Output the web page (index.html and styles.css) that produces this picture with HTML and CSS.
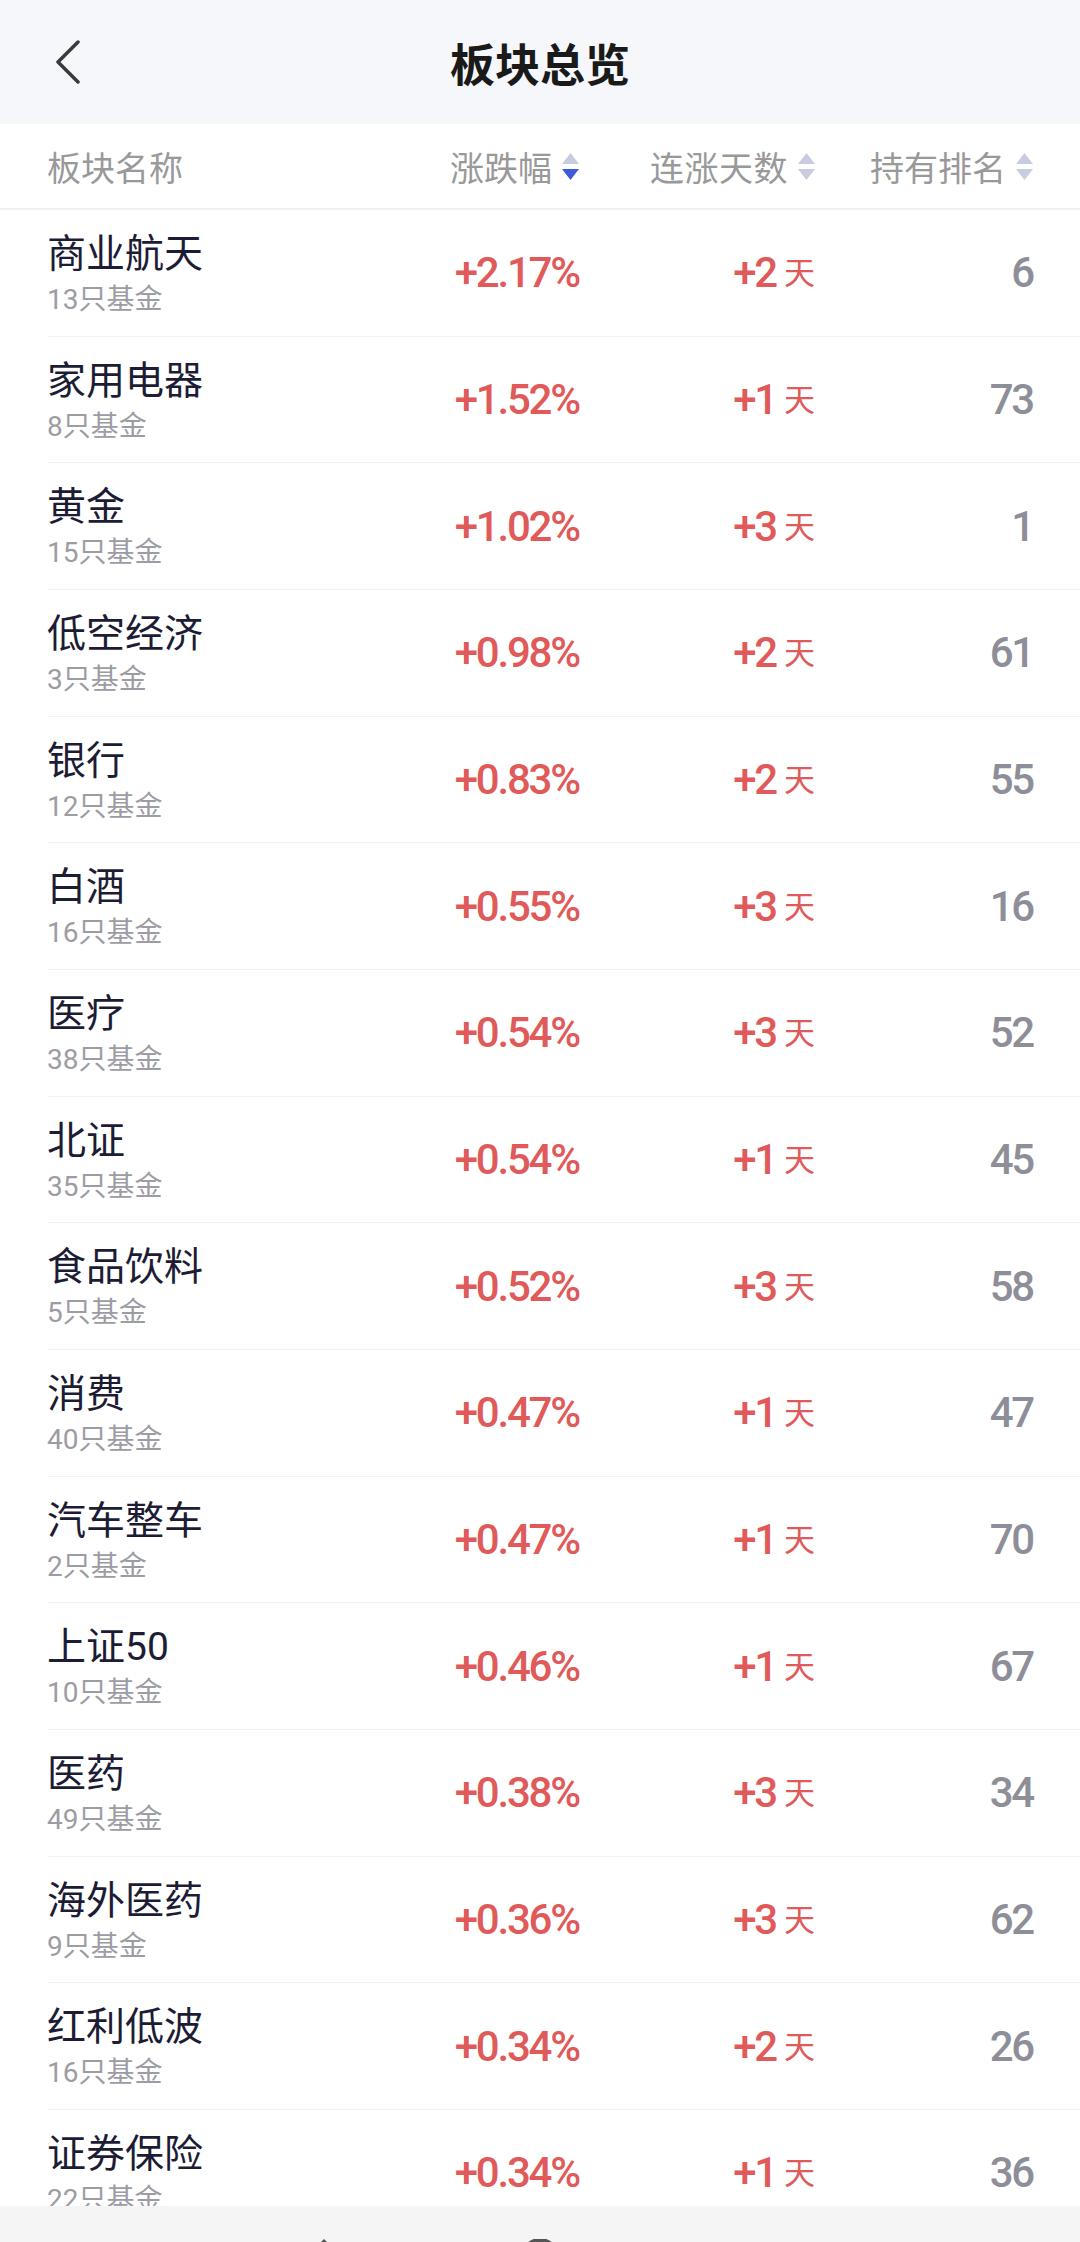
FILE: index.html
```html
<!DOCTYPE html>
<html lang="zh-CN">
<head>
    <meta charset="UTF-8">
    <meta name="viewport" content="width=device-width, initial-scale=1.0">
    <title>板块总览</title>
    <link rel="stylesheet" href="styles.css">
</head>
<body>

<header class="topbar">
    <div class="back">
        <svg width="30" height="44" viewBox="0 0 30 44"><polyline points="24,2 4,22 24,42" fill="none" stroke="#3a3a3a" stroke-width="3.5" stroke-linecap="round" stroke-linejoin="round"/></svg>
    </div>
    <div class="title">板块总览</div>
    <div></div>
</header>

<!-- Cabecera de la tabla -->
<div class="thead">
    <div class="col-name">板块名称</div>
    <div class="col-pct">涨跌幅
        <svg class="sort" width="17" height="27" viewBox="0 0 17 27"><polygon points="8.5,0 17,11 0,11" fill="#c9cce0"/><polygon points="0,16 17,16 8.5,27" fill="#3e5bd6"/></svg>
    </div>
    <div class="col-days">连涨天数
        <svg class="sort" width="17" height="27" viewBox="0 0 17 27"><polygon points="8.5,0 17,11 0,11" fill="#c9cce0"/><polygon points="0,16 17,16 8.5,27" fill="#c9cce0"/></svg>
    </div>
    <div class="col-rank">持有排名
        <svg class="sort" width="17" height="27" viewBox="0 0 17 27"><polygon points="8.5,0 17,11 0,11" fill="#c9cce0"/><polygon points="0,16 17,16 8.5,27" fill="#c9cce0"/></svg>
    </div>
</div>

<div class="list">
    <div class="row">
        <div class="col-name info"><div class="name">商业航天</div><div class="count">13只基金</div></div>
        <div class="col-pct num up">+2.17%</div>
        <div class="col-days num up">+2<span class="day">天</span></div>
        <div class="col-rank num rank">6</div>
    </div>
    <div class="row">
        <div class="col-name info"><div class="name">家用电器</div><div class="count">8只基金</div></div>
        <div class="col-pct num up">+1.52%</div>
        <div class="col-days num up">+1<span class="day">天</span></div>
        <div class="col-rank num rank">73</div>
    </div>
    <div class="row">
        <div class="col-name info"><div class="name">黄金</div><div class="count">15只基金</div></div>
        <div class="col-pct num up">+1.02%</div>
        <div class="col-days num up">+3<span class="day">天</span></div>
        <div class="col-rank num rank">1</div>
    </div>
    <div class="row">
        <div class="col-name info"><div class="name">低空经济</div><div class="count">3只基金</div></div>
        <div class="col-pct num up">+0.98%</div>
        <div class="col-days num up">+2<span class="day">天</span></div>
        <div class="col-rank num rank">61</div>
    </div>
    <div class="row">
        <div class="col-name info"><div class="name">银行</div><div class="count">12只基金</div></div>
        <div class="col-pct num up">+0.83%</div>
        <div class="col-days num up">+2<span class="day">天</span></div>
        <div class="col-rank num rank">55</div>
    </div>
    <div class="row">
        <div class="col-name info"><div class="name">白酒</div><div class="count">16只基金</div></div>
        <div class="col-pct num up">+0.55%</div>
        <div class="col-days num up">+3<span class="day">天</span></div>
        <div class="col-rank num rank">16</div>
    </div>
    <div class="row">
        <div class="col-name info"><div class="name">医疗</div><div class="count">38只基金</div></div>
        <div class="col-pct num up">+0.54%</div>
        <div class="col-days num up">+3<span class="day">天</span></div>
        <div class="col-rank num rank">52</div>
    </div>
    <div class="row">
        <div class="col-name info"><div class="name">北证</div><div class="count">35只基金</div></div>
        <div class="col-pct num up">+0.54%</div>
        <div class="col-days num up">+1<span class="day">天</span></div>
        <div class="col-rank num rank">45</div>
    </div>
    <div class="row">
        <div class="col-name info"><div class="name">食品饮料</div><div class="count">5只基金</div></div>
        <div class="col-pct num up">+0.52%</div>
        <div class="col-days num up">+3<span class="day">天</span></div>
        <div class="col-rank num rank">58</div>
    </div>
    <div class="row">
        <div class="col-name info"><div class="name">消费</div><div class="count">40只基金</div></div>
        <div class="col-pct num up">+0.47%</div>
        <div class="col-days num up">+1<span class="day">天</span></div>
        <div class="col-rank num rank">47</div>
    </div>
    <div class="row">
        <div class="col-name info"><div class="name">汽车整车</div><div class="count">2只基金</div></div>
        <div class="col-pct num up">+0.47%</div>
        <div class="col-days num up">+1<span class="day">天</span></div>
        <div class="col-rank num rank">70</div>
    </div>
    <div class="row">
        <div class="col-name info"><div class="name">上证50</div><div class="count">10只基金</div></div>
        <div class="col-pct num up">+0.46%</div>
        <div class="col-days num up">+1<span class="day">天</span></div>
        <div class="col-rank num rank">67</div>
    </div>
    <div class="row">
        <div class="col-name info"><div class="name">医药</div><div class="count">49只基金</div></div>
        <div class="col-pct num up">+0.38%</div>
        <div class="col-days num up">+3<span class="day">天</span></div>
        <div class="col-rank num rank">34</div>
    </div>
    <div class="row">
        <div class="col-name info"><div class="name">海外医药</div><div class="count">9只基金</div></div>
        <div class="col-pct num up">+0.36%</div>
        <div class="col-days num up">+3<span class="day">天</span></div>
        <div class="col-rank num rank">62</div>
    </div>
    <div class="row">
        <div class="col-name info"><div class="name">红利低波</div><div class="count">16只基金</div></div>
        <div class="col-pct num up">+0.34%</div>
        <div class="col-days num up">+2<span class="day">天</span></div>
        <div class="col-rank num rank">26</div>
    </div>
    <div class="row">
        <div class="col-name info"><div class="name">证券保险</div><div class="count">22只基金</div></div>
        <div class="col-pct num up">+0.34%</div>
        <div class="col-days num up">+1<span class="day">天</span></div>
        <div class="col-rank num rank">36</div>
    </div>
</div>

<!-- Barra inferior -->
<div class="tabbar">
    <div></div>
    <div class="tab"><svg width="40" height="40" viewBox="0 0 40 40"><polygon points="20,0 36,16 4,16" fill="#555"/></svg></div>
    <div class="tab"><svg width="40" height="40" viewBox="0 0 40 40"><circle cx="20" cy="18" r="17" fill="none" stroke="#555" stroke-width="4"/></svg></div>
    <div></div>
    <div></div>
</div>

</body>
</html>
```

FILE: styles.css
```css
body {
    margin: 0;
    padding: 0;
    background-color: #fff;
    font-family: Roboto, "Noto Sans CJK SC", sans-serif;
}

/* Barra superior */
.topbar {
    height: 124px;
    background-color: #f6f7fb;
    display: grid;
    grid-template-columns: 1fr auto 1fr;
    align-items: center;
}
.back {
    display: flex;
    padding-left: 54px;
}
.title {
    font-family: "Noto Sans CJK SC", sans-serif;
    font-size: 45px;
    font-weight: 700;
    color: #1a1a1a;
}

/* Columnas */
.col-name {
    flex: 1;
}
.col-pct, .col-days, .col-rank {
    display: flex;
    justify-content: flex-end;
    align-items: center;
}
.col-pct {
    width: 200px;
}
.col-days {
    width: 236px;
}
.col-rank {
    width: 218px;
}

.thead {
    display: flex;
    align-items: center;
    height: 86px;
    box-sizing: border-box;
    padding: 0 47px;
    border-bottom: 2px solid #f0f1f3;
    font-family: "Noto Sans CJK SC", sans-serif;
    font-size: 34px;
    color: #999;
}
.thead .col-days {
    letter-spacing: 0.5px;
}
.sort {
    margin-left: 10px;
}

/* Filas */
.row {
    display: flex;
    align-items: center;
    height: 126.67px;
    box-sizing: border-box;
    margin-left: 47px;
    padding-right: 47px;
    border-bottom: 1px solid #f2f2f4;
}
.info {
    align-self: flex-start;
    padding-top: 20px;
}
.name {
    font-size: 39px;
    line-height: 48px;
    color: #1c1c34;
}
.count {
    font-size: 28px;
    line-height: 36px;
    margin-top: 4px;
    color: #9c9ca4;
}
.num {
    font-family: Roboto, sans-serif;
    font-size: 42px;
    font-weight: 500;
    letter-spacing: -2.2px;
}
.up {
    color: #e05a5a;
}
.rank {
    color: #8e8e99;
}
.day {
    font-family: "Noto Sans CJK SC", sans-serif;
    font-size: 31px;
    font-weight: 400;
    letter-spacing: 0;
    margin-left: 8px;
    margin-bottom: 4px;
    line-height: 1;
}

/* Barra inferior */
.tabbar {
    position: fixed;
    left: 0;
    right: 0;
    bottom: 0;
    height: 36px;
    overflow: hidden;
    background-color: #f5f5f5;
    display: grid;
    grid-template-columns: repeat(5, 1fr);
}
.tab {
    display: flex;
    justify-content: center;
    padding-top: 33px;
}
```
